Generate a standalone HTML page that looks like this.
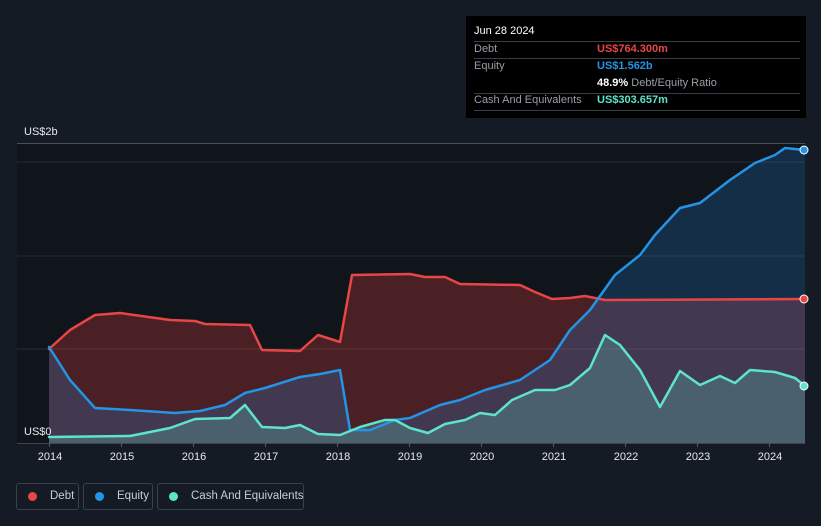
<!DOCTYPE html>
<html><head><meta charset="utf-8"><style>
html,body{margin:0;width:821px;height:526px;overflow:hidden}
body{background:#151b25;font-family:"Liberation Sans",sans-serif;position:relative}
.tt{position:absolute;left:466px;top:16px;width:340px;height:102px;background:#000;color:#fff;font-size:11px}
.tt .r{position:absolute;left:8px;right:6px;border-top:1px solid #3a3d44}
.tt span{position:absolute;white-space:nowrap}
.lg{position:absolute;top:483px;height:27px;border:1px solid #3b414c;border-radius:3px;color:#c9ccd2;font-size:11.5px;line-height:25px;box-sizing:border-box;white-space:nowrap}
.lg i{position:absolute;left:11px;top:8px;width:9px;height:9px;border-radius:50%}
.lg b{font-weight:normal;position:absolute;left:33px}
.yr{position:absolute;top:451px;color:#e6e8ec;font-size:11px;transform:translateX(-50%)}
</style></head><body>
<svg width="821" height="526" style="position:absolute;left:0;top:0">
<rect x="17" y="143" width="788" height="300" fill="#10141b"/>
<line x1="17" y1="143.5" x2="805" y2="143.5" stroke="#4a4f58"/>
<line x1="17" y1="162" x2="805" y2="162" stroke="#262b33"/>
<line x1="17" y1="256" x2="805" y2="256" stroke="#262b33"/>
<line x1="17" y1="349" x2="805" y2="349" stroke="#2c2f36"/>
<polygon fill="rgba(226,66,66,0.28)" points="49,349 70,330 95,315 120,313 170,320 195,321 205,324 250,325 262,350 300,351 318,335 340,342 352,275 410,274 425,277 445,277 460,284 520,285 535,292 552,299 570,298 585,296 605,300 805,299 805,443 49,443"/>
<polygon fill="rgba(40,140,230,0.22)" points="49,347 70,380 95,408 130,410 175,413 200,411 225,405 245,393 265,388 300,377 320,374 340,370 350,430 370,430 395,420 410,418 440,405 460,400 485,390 520,380 550,360 570,330 590,310 615,275 640,255 655,235 680,208 700,203 730,180 755,163 775,155 785,148 805,150 805,443 49,443"/>
<polygon fill="rgba(100,220,200,0.25)" points="49,437 130,436 170,428 195,419 230,418 245,405 262,427 285,428 300,425 318,434 340,435 360,427 385,420 395,420 410,428 428,433 445,424 465,420 480,413 495,415 512,400 535,390 555,390 570,385 590,368 605,335 620,345 640,370 660,407 680,371 700,385 720,376 735,383 750,370 775,372 795,378 805,386 805,443 49,443"/>
<g fill="none" stroke-width="2.5" stroke-linejoin="round" stroke-linecap="round">
<polyline stroke="#e84545" points="49,349 70,330 95,315 120,313 170,320 195,321 205,324 250,325 262,350 300,351 318,335 340,342 352,275 410,274 425,277 445,277 460,284 520,285 535,292 552,299 570,298 585,296 605,300 805,299"/>
<polyline stroke="#2394e6" points="49,347 70,380 95,408 130,410 175,413 200,411 225,405 245,393 265,388 300,377 320,374 340,370 350,430 370,430 395,420 410,418 440,405 460,400 485,390 520,380 550,360 570,330 590,310 615,275 640,255 655,235 680,208 700,203 730,180 755,163 775,155 785,148 805,150"/>
<polyline stroke="#5ee3cc" points="49,437 130,436 170,428 195,419 230,418 245,405 262,427 285,428 300,425 318,434 340,435 360,427 385,420 395,420 410,428 428,433 445,424 465,420 480,413 495,415 512,400 535,390 555,390 570,385 590,368 605,335 620,345 640,370 660,407 680,371 700,385 720,376 735,383 750,370 775,372 795,378 805,386"/>
</g>
<circle cx="804" cy="150" r="4" fill="#2394e6" stroke="#fff" stroke-width="1"/>
<circle cx="804" cy="299" r="4" fill="#e84545" stroke="#fff" stroke-width="1"/>
<circle cx="804" cy="386" r="4" fill="#5ee3cc" stroke="#fff" stroke-width="1"/>
<line x1="17" y1="443.5" x2="805" y2="443.5" stroke="#3f444d"/>
<g stroke="#555a63"><line x1="49.5" y1="443" x2="49.5" y2="447"/><line x1="121.5" y1="443" x2="121.5" y2="447"/><line x1="193.5" y1="443" x2="193.5" y2="447"/><line x1="265.5" y1="443" x2="265.5" y2="447"/><line x1="337.5" y1="443" x2="337.5" y2="447"/><line x1="409.5" y1="443" x2="409.5" y2="447"/><line x1="481.5" y1="443" x2="481.5" y2="447"/><line x1="553.5" y1="443" x2="553.5" y2="447"/><line x1="625.5" y1="443" x2="625.5" y2="447"/><line x1="697.5" y1="443" x2="697.5" y2="447"/><line x1="769.5" y1="443" x2="769.5" y2="447"/></g>
<text x="24" y="135" fill="#e6e8ec" font-size="11" font-family="Liberation Sans">US$2b</text>
<text x="24" y="435" fill="#e6e8ec" font-size="11" font-family="Liberation Sans">US$0</text>
</svg>
<div class="yr" style="left:50px">2014</div><div class="yr" style="left:122px">2015</div><div class="yr" style="left:194px">2016</div><div class="yr" style="left:266px">2017</div><div class="yr" style="left:338px">2018</div><div class="yr" style="left:410px">2019</div><div class="yr" style="left:482px">2020</div><div class="yr" style="left:554px">2021</div><div class="yr" style="left:626px">2022</div><div class="yr" style="left:698px">2023</div><div class="yr" style="left:770px">2024</div>
<div class="tt">
<span style="left:8px;top:9px">Jun 28 2024</span>
<div class="r" style="top:25px"></div>
<span style="left:8px;top:27px;color:#9a9ea6">Debt</span><span style="left:131px;top:27px;color:#e84545;font-weight:bold">US$764.300m</span>
<div class="r" style="top:42px"></div>
<span style="left:8px;top:44px;color:#9a9ea6">Equity</span><span style="left:131px;top:44px;color:#2394e6;font-weight:bold">US$1.562b</span>
<span style="left:131px;top:61px;color:#9a9ea6"><b style="color:#fff">48.9%</b> Debt/Equity Ratio</span>
<div class="r" style="top:77px"></div>
<span style="left:8px;top:78px;color:#9a9ea6">Cash And Equivalents</span><span style="left:131px;top:78px;color:#5ee3cc;font-weight:bold">US$303.657m</span>
<div class="r" style="top:94px"></div>
</div>
<div class="lg" style="left:16px;width:63px"><i style="background:#e84545"></i><b>Debt</b></div>
<div class="lg" style="left:83px;width:70px"><i style="background:#2394e6"></i><b>Equity</b></div>
<div class="lg" style="left:157px;width:147px"><i style="background:#5ee3cc"></i><b>Cash And Equivalents</b></div>
</body></html>
